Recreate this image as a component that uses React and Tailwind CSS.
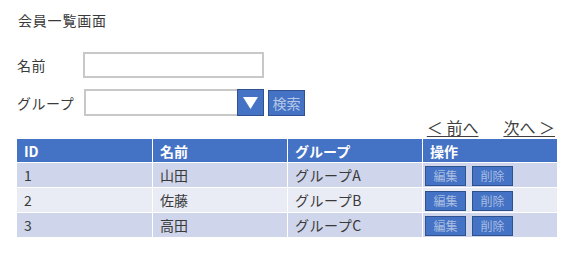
import React from "react";

const rows = [
  { id: "1", name: "山田", group: "グループA", bg: "bg-[#cfd5ea]" },
  { id: "2", name: "佐藤", group: "グループB", bg: "bg-[#e9ebf5]" },
  { id: "3", name: "高田", group: "グループC", bg: "bg-[#cfd5ea]" },
];

function SmallButton({ children }) {
  return (
    <div className="w-[41px] h-[20px] bg-[#4472c4] border border-[#2f528f] flex items-center justify-center text-[12px] leading-none text-[#a9bde2]">
      {children}
    </div>
  );
}

export default function App() {
  return (
    <div
      className="w-[576px] h-[254px] bg-white text-[#3a3a3a] overflow-hidden"
      style={{ fontFamily: '"Noto Sans CJK JP", "Noto Sans", sans-serif' }}
    >
      <div className="pl-[18px] pt-[10px] h-[31px] text-[14px] leading-[20px] tracking-[0.8px]">
        会員一覧画面
      </div>

      <div className="mt-[21px] pl-[17px] flex items-center h-[26px]">
        <div className="w-[66px] text-[14px] leading-[20px] tracking-[0.5px]">名前</div>
        <div className="w-[181px] h-[26px] border-2 border-[#c8c8c8] bg-white" />
      </div>

      <div className="mt-[11px] pl-[17px] flex items-center h-[27px]">
        <div className="w-[67px] text-[14px] leading-[20px] tracking-[0.5px]">グループ</div>
        <div className="w-[153px] h-[27px] border-2 border-[#c8c8c8] border-r-0 bg-white" />
        <div className="w-[27px] h-[27px] bg-[#4472c4] border border-[#2f528f] flex items-center justify-center">
          <svg width="15" height="12" viewBox="0 0 15 12">
            <polygon points="0,0 15,0 7.5,12" fill="white" />
          </svg>
        </div>
        <div className="ml-[4px] w-[37px] h-[26px] bg-[#4472c4] border border-[#2f528f] flex items-center justify-center text-[14px] leading-none text-[#b4c7e7]">
          検索
        </div>
      </div>

      <div className="w-[557px] flex justify-end items-end h-[23px] pb-[3px] text-[16px] leading-[18px]">
        <span className="underline underline-offset-[2px] decoration-[1px] text-[#404040]">＜ 前へ</span>
        <span className="ml-[25px] mr-[2px] underline underline-offset-[2px] decoration-[1px] text-[#404040]">次へ ＞</span>
      </div>

      <div className="ml-[17px] w-[540px] flex flex-col">
        <div className="flex h-[23px] bg-[#4472c4] text-white font-bold text-[14px] leading-none">
          <div className="w-[135px] pl-[7px] flex items-center">ID</div>
          <div className="w-[135px] pl-[7px] flex items-center border-l border-white">名前</div>
          <div className="w-[135px] pl-[7px] flex items-center border-l border-white">グループ</div>
          <div className="w-[135px] pl-[7px] flex items-center border-l border-white">操作</div>
        </div>
        {rows.map((r) => (
          <div key={r.id} className={`flex h-[25px] border-t border-white ${r.bg} text-[14px] leading-none`}>
            <div className="w-[135px] pl-[7px] flex items-center">{r.id}</div>
            <div className="w-[135px] pl-[7px] flex items-center border-l border-white">{r.name}</div>
            <div className="w-[135px] pl-[7px] flex items-center border-l border-white tracking-[0.5px]">{r.group}</div>
            <div className="w-[135px] pl-[2px] pt-[3px] flex items-start gap-[6px] border-l border-white">
              <SmallButton>編集</SmallButton>
              <SmallButton>削除</SmallButton>
            </div>
          </div>
        ))}
      </div>
    </div>
  );
}
